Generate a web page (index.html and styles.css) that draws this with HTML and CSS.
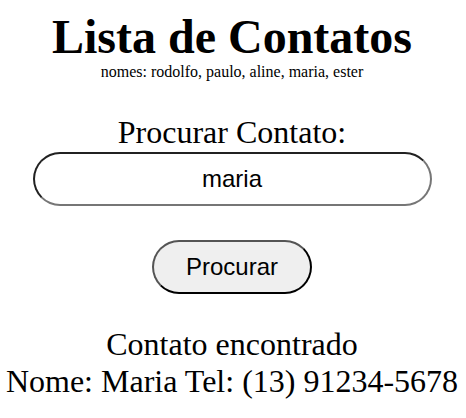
FILE: index.html
```html
<!DOCTYPE html>
<html lang="pt">
<head>
<meta charset="utf-8">
<title>Lista de Contatos</title>
<link rel="stylesheet" href="styles.css">
</head>
<body>
<main class="page">
  <h1 class="title">Lista de Contatos</h1>
  <p class="names">nomes: rodolfo, paulo, aline, maria, ester</p>
  <label class="label" for="busca">Procurar Contato:</label>
  <input class="search" id="busca" type="text" value="maria">
  <button class="btn" type="button">Procurar</button>
  <div class="result">
    <p class="line">Contato encontrado</p>
    <p class="line">Nome: Maria Tel: (13) 91234-5678</p>
  </div>
</main>
</body>
</html>
```

FILE: styles.css
```css
html, body {
  margin: 0;
  padding: 0;
  background: #ffffff;
}

.page {
  display: flex;
  flex-direction: column;
  align-items: center;
  width: 464px;
  font-family: "Liberation Serif", "Times New Roman", serif;
  color: #000;
  text-align: center;
}

.title {
  margin: 11px 0 0;
  font-size: 48px;
  line-height: 52px;
  font-weight: bold;
}

.names {
  margin: 0;
  font-size: 16px;
  line-height: 18px;
}

.label {
  display: block;
  margin-top: 33px;
  font-size: 32px;
  line-height: 37px;
}

.search {
  margin: 1px 0 0;
  box-sizing: border-box;
  width: 399px;
  height: 54px;
  padding: 0 12px;
  border-radius: 27px;
  font-family: "Liberation Sans", Arial, sans-serif;
  font-size: 24px;
  text-align: center;
  color: #000;
}

.btn {
  margin: 34px 0 0;
  box-sizing: border-box;
  width: 160px;
  height: 54px;
  padding: 0;
  border-radius: 27px;
  font-family: "Liberation Sans", Arial, sans-serif;
  font-size: 24px;
  color: #000;
}

.result {
  margin-top: 32px;
}

.line {
  margin: 0;
  font-size: 32px;
  line-height: 37px;
}
```
